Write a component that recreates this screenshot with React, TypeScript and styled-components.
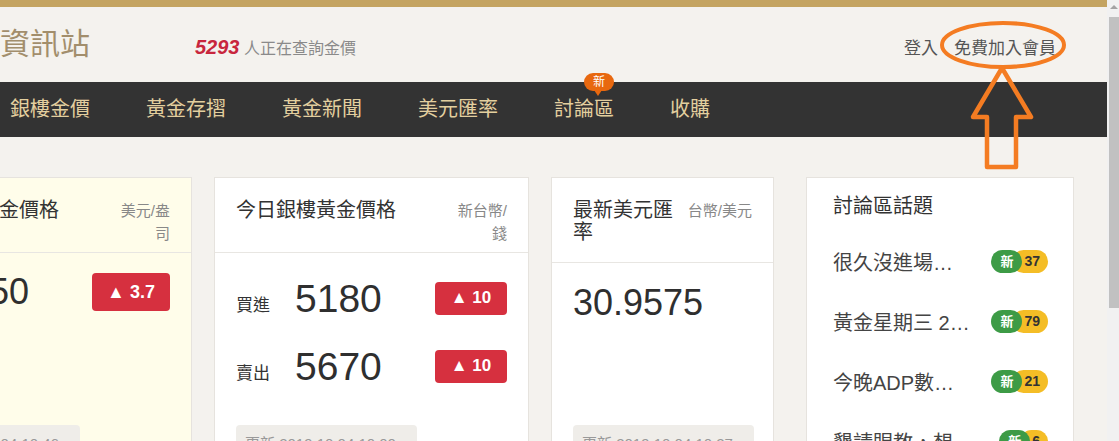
import styled, { createGlobalStyle } from "styled-components"

type PriceRowData = {
    label?: string
    value: string
    change: string
}

type Topic = {
    title: string
    count: number
}

const topics: Topic[] = [
    { title: "很久沒進場…", count: 37 },
    { title: "黃金星期三 2…", count: 79 },
    { title: "今晚ADP數…", count: 21 },
    { title: "懇請賜教，想…", count: 6 },
]

const bankRows: PriceRowData[] = [
    { label: "買進", value: "5180", change: "10" },
    { label: "賣出", value: "5670", change: "10" },
]

const navItems = ["銀樓金價", "黃金存摺", "黃金新聞", "美元匯率", "討論區", "收購"]

export default function App() {
    return (
        <>
            <GlobalStyle />
            <Shell>
                <Main>
                    <GoldBar />
                    <Header>
                        <Logo>資訊站</Logo>
                        <Counter>
                            <b>5293</b> 人正在查詢金價
                        </Counter>
                        <Account>
                            <span>登入</span>
                            <span>免費加入會員</span>
                        </Account>
                    </Header>
                    <Nav>
                        {navItems.map((item) => (
                            <NavItem key={item} href="#">
                                {item}
                                {item === "討論區" && <NewTip>新</NewTip>}
                            </NavItem>
                        ))}
                    </Nav>

                    <Content>
                        <PriceGroup>
                            <Card $w={315} $bg="#fffdea">
                                <CardHead>
                                    <CardTitle>今日國際黃金價格</CardTitle>
                                    <Unit $w={56}>美元/盎司</Unit>
                                </CardHead>
                                <CardBody $pt={14}>
                                    <PriceRow>
                                        <Big $size={36}>1505.50</Big>
                                        <Change $big>▲ 3.7</Change>
                                    </PriceRow>
                                </CardBody>
                                <CardFoot>
                                    <Updated>更新 2019.10.04 10:46 »</Updated>
                                </CardFoot>
                            </Card>

                            <Card $w={315}>
                                <CardHead>
                                    <CardTitle>今日銀樓黃金價格</CardTitle>
                                    <Unit $w={56}>新台幣/錢</Unit>
                                </CardHead>
                                <CardBody $pt={20}>
                                    {bankRows.map((row) => (
                                        <PriceRow key={row.label}>
                                            <Label>{row.label}</Label>
                                            <Big $size={39}>{row.value}</Big>
                                            <Change>▲ {row.change}</Change>
                                        </PriceRow>
                                    ))}
                                </CardBody>
                                <CardFoot>
                                    <Updated>更新 2019.10.04 10:00 »</Updated>
                                </CardFoot>
                            </Card>

                            <Card $w={223}>
                                <CardHead>
                                    <CardTitle>最新美元匯率</CardTitle>
                                    <Unit $w={68}>台幣/美元</Unit>
                                </CardHead>
                                <CardBody $pt={15}>
                                    <PriceRow>
                                        <Big $size={36}>30.9575</Big>
                                    </PriceRow>
                                </CardBody>
                                <CardFoot>
                                    <Updated>更新 2019.10.04 10:27 »</Updated>
                                </CardFoot>
                            </Card>
                        </PriceGroup>

                        <TopicCard>
                            <TopicTitle>討論區話題</TopicTitle>
                            {topics.map((t) => (
                                <TopicRow key={t.title}>
                                    <TopicText>{t.title}</TopicText>
                                    <Tags>
                                        <NewTag>新</NewTag>
                                        <CountTag>{t.count}</CountTag>
                                    </Tags>
                                </TopicRow>
                            ))}
                        </TopicCard>
                    </Content>

                    <Annotation width="150" height="160" viewBox="0 0 150 160">
                        <ellipse cx="73" cy="30" rx="61" ry="22" fill="none" stroke="#f47c22" strokeWidth="4" />
                        <path
                            d="M72 53 L101 102 L86 102 L86 152 L57 152 L57 102 L43 102 Z"
                            fill="none"
                            stroke="#f47c22"
                            strokeWidth="4.5"
                            strokeLinejoin="round"
                        />
                    </Annotation>
                </Main>

                <ScrollBar>
                    <ScrollArrow />
                    <Thumb />
                </ScrollBar>
            </Shell>
        </>
    )
}

const GlobalStyle = createGlobalStyle`
    html, body{
        margin: 0;
        padding: 0;
    }
    body{
        background: #f4f2ee;
        font-family: "Liberation Sans", "Noto Sans CJK TC", sans-serif;
        color: #333;
        overflow: hidden;
    }
`;

const Shell = styled.div`
    display: flex;
    width: 1119px;
    height: 441px;
    overflow: hidden;
`;

const Main = styled.div`
    position: relative;
    flex: 1;
    min-width: 0;
    overflow: hidden;
`;

const GoldBar = styled.div`
    height: 7px;
    background: #c4a461;
`;

const Header = styled.header`
    display: flex;
    align-items: baseline;
    height: 75px;
    box-sizing: border-box;
    padding: 12px 51px 0 0;
`;

const Logo = styled.div`
    font-size: 30px;
    color: #a28e6c;
`;

const Counter = styled.div`
    margin-left: 105px;
    font-size: 16px;
    color: #8a8a8a;

    b{
        font-size: 20px;
        font-style: italic;
        font-weight: bold;
        color: #c8263d;
    }
`;

const Account = styled.div`
    display: flex;
    gap: 16px;
    margin-left: auto;
    font-size: 17px;
    color: #555;
`;

const Nav = styled.nav`
    display: flex;
    gap: 56px;
    height: 55px;
    padding-left: 10px;
    background: #333;
`;

const NavItem = styled.a`
    position: relative;
    font-size: 20px;
    line-height: 55px;
    color: #e3cf9f;
    text-decoration: none;
`;

const NewTip = styled.span`
    position: absolute;
    left: 30px;
    top: -9px;
    width: 30px;
    height: 18px;
    border-radius: 9px;
    background: #e8680f;
    color: #fff;
    font-size: 12px;
    line-height: 18px;
    text-align: center;

    &::after{
        content: "";
        position: absolute;
        left: 10px;
        bottom: -5px;
        border-left: 4px solid transparent;
        border-right: 4px solid transparent;
        border-top: 6px solid #e8680f;
    }
`;

const Content = styled.div`
    display: flex;
    align-items: flex-start;
    gap: 32px;
    margin: 40px 0 0 -123px;
`;

const PriceGroup = styled.div`
    display: flex;
    gap: 22px;
`;

const Card = styled.section<{ $w: number; $bg?: string }>`
    display: flex;
    flex-direction: column;
    flex-shrink: 0;
    width: ${(p) => p.$w}px;
    box-sizing: border-box;
    background: ${(p) => p.$bg || "#fff"};
    border: 1px solid #e6e3de;
`;

const CardHead = styled.div`
    display: flex;
    align-items: flex-start;
    padding: 21px 21px 7px;
    border-bottom: 1px solid #e8e6e2;
`;

const CardTitle = styled.h3`
    flex: 1;
    margin: 0 0 12px;
    font-size: 20px;
    font-weight: normal;
    line-height: 22px;
    color: #333;
`;

const Unit = styled.div<{ $w: number }>`
    width: ${(p) => p.$w}px;
    font-size: 15px;
    line-height: 23px;
    color: #888;
    text-align: right;
`;

const CardBody = styled.div<{ $pt: number }>`
    display: flex;
    flex-direction: column;
    gap: 18px;
    padding: ${(p) => p.$pt}px 21px 0;
`;

const PriceRow = styled.div`
    display: flex;
    align-items: center;
    height: 50px;
`;

const Label = styled.span`
    align-self: flex-end;
    margin: 0 25px 7px 0;
    font-size: 17px;
    color: #333;
`;

const Big = styled.span<{ $size: number }>`
    font-size: ${(p) => p.$size}px;
    line-height: 1;
    color: #2f2f2f;
`;

const Change = styled.span<{ $big?: boolean }>`
    display: flex;
    align-items: center;
    justify-content: center;
    margin-left: auto;
    width: ${(p) => (p.$big ? 78 : 72)}px;
    height: ${(p) => (p.$big ? 38 : 33)}px;
    border-radius: 4px;
    background: #d6303f;
    color: #fff;
    font-size: ${(p) => (p.$big ? 18 : 17)}px;
    font-weight: bold;
`;

const CardFoot = styled.div`
    margin-top: auto;
    padding: 34px 21px 20px;
`;

const Updated = styled.span`
    display: inline-block;
    padding: 8px 9px;
    border-radius: 4px;
    background: #efede9;
    font-size: 15px;
    line-height: 21px;
    color: #999;
    white-space: nowrap;
`;

const TopicCard = styled.section`
    flex-shrink: 0;
    width: 268px;
    box-sizing: border-box;
    padding: 14px 25px 0 26px;
    background: #fff;
    border: 1px solid #e6e3de;
`;

const TopicTitle = styled.h3`
    margin: 0 0 11px;
    font-size: 20px;
    font-weight: normal;
    line-height: 28px;
    color: #333;
`;

const TopicRow = styled.div`
    display: flex;
    align-items: center;
    justify-content: space-between;
    height: 60px;
`;

const TopicText = styled.span`
    font-size: 20px;
    color: #444;
    white-space: nowrap;
`;

const Tags = styled.span`
    display: flex;
`;

const NewTag = styled.span`
    position: relative;
    z-index: 1;
    height: 23px;
    padding: 0 9px;
    border-radius: 12px;
    background: #3d9b46;
    color: #fff;
    font-size: 13px;
    font-weight: bold;
    line-height: 23px;
`;

const CountTag = styled.span`
    height: 23px;
    margin-left: -10px;
    padding: 0 8px 0 12px;
    border-radius: 12px;
    background: #f4bd26;
    color: #333;
    font-size: 14px;
    font-weight: bold;
    line-height: 23px;
`;

const Annotation = styled.svg`
    position: absolute;
    left: 930px;
    top: 15px;
    pointer-events: none;
`;

const ScrollBar = styled.div`
    display: flex;
    flex-direction: column;
    width: 12px;
    background: #f1f1f1;
`;

const ScrollArrow = styled.div`
    display: flex;
    align-items: center;
    justify-content: center;
    height: 17px;

    &::before{
        content: "";
        border-left: 4px solid transparent;
        border-right: 4px solid transparent;
        border-bottom: 4px solid #a3a3a3;
        margin: -3px 0 0 2px;
    }
`;

const Thumb = styled.div`
    align-self: flex-end;
    width: 10px;
    height: 291px;
    background: #c1c1c1;
`;
